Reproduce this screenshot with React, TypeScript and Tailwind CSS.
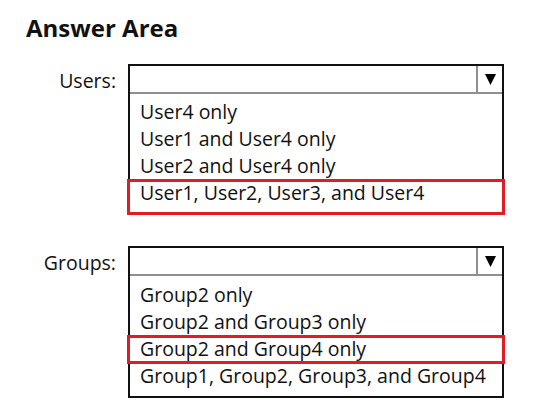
import React from 'react';

interface DropdownProps {
  label: string;
  options: string[];
  selected: number;
  listPad: string;
}

const Arrow: React.FC = () => (
  <svg width="11" height="11" viewBox="0 0 11 11">
    <polygon points="0,0 11,0 5.5,11" fill="#000" />
  </svg>
);

const Dropdown: React.FC<DropdownProps> = ({ label, options, selected, listPad }) => {
  const last = options.length - 1;
  return (
    <div className="flex items-start gap-3">
      <div className="w-[90px] mt-[3px] text-right leading-[27px]">{label}</div>
      <div className="w-[376px] border-2 border-[#111]">
        {/* closed select header */}
        <div className="flex h-[28px] border-b-2 border-[#8f8f8f]">
          <div className="flex-1" />
          <div className="w-[26px] border-l-2 border-[#8f8f8f] flex items-center justify-center">
            <Arrow />
          </div>
        </div>
        {/* option list */}
        <div className={listPad}>
          {options.map((opt, i) =>
            i === selected ? (
              <div
                key={opt}
                className={
                  i === last
                    ? '-mx-[3px] pl-[13px] pb-[9px] -mb-[2px] leading-[27px] ring-3 ring-inset ring-[#e31b23]'
                    : '-mx-[3px] pl-[13px] pb-[2px] -mb-[2px] leading-[27px] ring-3 ring-inset ring-[#e31b23]'
                }
              >
                {opt}
              </div>
            ) : (
              <div key={opt} className="pl-[10px] leading-[27px]">
                {opt}
              </div>
            )
          )}
        </div>
      </div>
    </div>
  );
};

const App: React.FC = () => {
  return (
    <div className="bg-white w-[539px] h-[418px] pl-[26px] pt-3 text-[#111] text-[19.5px] font-['Open_Sans',sans-serif]">
      <h1 className="text-[24px] font-bold leading-8">Answer Area</h1>
      <div className="mt-5 flex flex-col gap-[31px]">
        <Dropdown
          label="Users:"
          options={['User4 only', 'User1 and User4 only', 'User2 and User4 only', 'User1, User2, User3, and User4']}
          selected={3}
          listPad="pt-1"
        />
        <Dropdown
          label="Groups:"
          options={['Group2 only', 'Group2 and Group3 only', 'Group2 and Group4 only', 'Group1, Group2, Group3, and Group4']}
          selected={2}
          listPad="pt-[5px] pb-[7px]"
        />
      </div>
    </div>
  );
};

export default App;
